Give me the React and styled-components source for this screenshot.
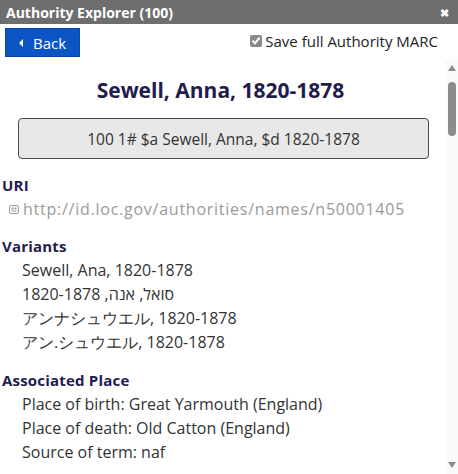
import React from 'react';
import styled, { createGlobalStyle } from 'styled-components';

const GlobalStyle = createGlobalStyle`
  body {
    margin: 0;
    font-family: 'Open Sans', 'Noto Sans', sans-serif;
    background: #ffffff;
  }
`;

const Dialog = styled.div`
  width: 458px;
  height: 474px;
  display: flex;
  flex-direction: column;
  overflow: hidden;
  background: #fff;
`;

const TitleBar = styled.div`
  height: 24px;
  flex: none;
  background: #6e6e6e;
  color: #fff;
  display: flex;
  align-items: center;
  justify-content: space-between;
  padding: 0 9px 0 6px;
  font-size: 14px;
  font-weight: 700;
`;

const CloseIcon = styled.span`
  font-size: 11px;
  line-height: 1;
  font-weight: 700;
`;

const Toolbar = styled.div`
  display: flex;
  align-items: center;
  justify-content: space-between;
  padding: 3px 20px 0 5px;
  flex: none;
  box-sizing: border-box;
  height: 36px;
`;

const BackButton = styled.button`
  width: 75px;
  height: 29px;
  background: #0b55c4;
  border: 1px solid #0948a8;
  color: #fff;
  font-family: 'Open Sans', sans-serif;
  font-size: 15px;
  display: flex;
  align-items: center;
  gap: 10px;
  padding: 0 0 0 13px;
  margin-top: -2px;
  cursor: pointer;
`;

const Caret = styled.span`
  width: 0;
  height: 0;
  border-top: 4px solid transparent;
  border-bottom: 4px solid transparent;
  border-right: 4px solid #fff;
`;

const SaveLabel = styled.label`
  display: flex;
  align-items: center;
  gap: 3px;
  font-size: 15px;
  color: #222;
  margin-top: -6px;
`;

const Check = styled.span`
  width: 12px;
  height: 12px;
  background: #8a8a8a;
  border-radius: 2px;
  display: flex;
  align-items: center;
  justify-content: center;
`;

const Body = styled.div`
  flex: 1;
  display: flex;
  min-height: 0;
`;

const Content = styled.div`
  flex: 1;
  padding: 0 0 0 2px;
`;

const Name = styled.h1`
  margin: 16px 0 0;
  text-align: center;
  font-size: 21px;
  line-height: 28px;
  font-weight: 700;
  color: #1f1c4e;
  padding-right: 6px;
`;

const MarcBox = styled.div`
  margin: 14px 16px 0 16px;
  height: 41px;
  box-sizing: border-box;
  background: #e8e8e8;
  border: 1px solid #4a4a4a;
  border-radius: 4px;
  display: flex;
  align-items: center;
  justify-content: center;
  font-size: 15.5px;
  color: #333;
`;

const SectionTitle = styled.h2`
  margin: ${(p) => p.$top}px 0 0;
  font-size: 15px;
  line-height: 20px;
  font-weight: 700;
  letter-spacing: 0.2px;
  color: #1f1c4e;
`;

const Lines = styled.div`
  padding-left: 20px;
  margin-top: 2px;
`;

const Line = styled.div`
  font-size: 16px;
  line-height: 24px;
  color: ${(p) => (p.$muted ? '#9a9a9a' : '#333')};
  display: flex;
  align-items: center;
  gap: 4px;
  white-space: nowrap;
`;

const UriLine = styled(Line)`
  margin-left: -13px;
  letter-spacing: 0.75px;
`;

const Scrollbar = styled.div`
  width: 13px;
  flex: none;
  background: #fafafa;
  display: flex;
  flex-direction: column;
  align-items: center;
  padding: 5px 0 6px;
  box-sizing: border-box;
`;

const Arrow = styled.span`
  width: 0;
  height: 0;
  border-left: 4px solid transparent;
  border-right: 4px solid transparent;
  ${(p) => (p.$down ? 'border-top: 6px solid #8a8a8a;' : 'border-bottom: 6px solid #8a8a8a;')}
`;

const Thumb = styled.div`
  width: 8px;
  height: 54px;
  margin-top: 11px;
  border-radius: 4px;
  background: #8c8c8c;
`;

const Track = styled.div`
  flex: 1;
`;

const LinkIcon = () => (
  <svg width="10" height="9" viewBox="0 0 10 9">
    <rect x="0.5" y="0.5" width="9" height="8" rx="1.5" fill="none" stroke="#9a9a9a" />
    <rect x="2.5" y="2.5" width="2" height="2" fill="#9a9a9a" />
    <rect x="5.5" y="2.5" width="2" height="2" fill="#9a9a9a" />
    <rect x="2.5" y="5.5" width="5" height="1" fill="#9a9a9a" />
  </svg>
);

const variants = [
  'Sewell, Ana, 1820-1878',
  'סואל, אנה, 1820-1878',
  'アンナシュウエル, 1820-1878',
  'アン.シュウエル, 1820-1878',
];

const places = [
  'Place of birth: Great Yarmouth (England)',
  'Place of death: Old Catton (England)',
  'Source of term: naf',
];

export default function App() {
  return (
    <Dialog>
      <GlobalStyle />
      <TitleBar>
        <span>Authority Explorer (100)</span>
        <CloseIcon>✖</CloseIcon>
      </TitleBar>
      <Toolbar>
        <BackButton>
          <Caret />
          Back
        </BackButton>
        <SaveLabel>
          <Check>
            <svg width="10" height="9" viewBox="0 0 10 9">
              <path d="M1.5 4.8 L4 7.2 L8.6 1.6" fill="none" stroke="#fff" strokeWidth="2" />
            </svg>
          </Check>
          Save full Authority MARC
        </SaveLabel>
      </Toolbar>
      <Body>
        <Content>
          <Name>Sewell, Anna, 1820-1878</Name>
          <MarcBox>100 1# $a Sewell, Anna, $d 1820-1878</MarcBox>
          <SectionTitle $top={16}>URI</SectionTitle>
          <Lines>
            <UriLine $muted>
              <LinkIcon />
              http://id.loc.gov/authorities/names/n50001405
            </UriLine>
          </Lines>
          <SectionTitle $top={15}>Variants</SectionTitle>
          <Lines>
            {variants.map((v) => (
              <Line key={v}>
                <span>{v}</span>
              </Line>
            ))}
          </Lines>
          <SectionTitle $top={16}>Associated Place</SectionTitle>
          <Lines>
            {places.map((p) => (
              <Line key={p}>{p}</Line>
            ))}
          </Lines>
        </Content>
        <Scrollbar>
          <Arrow />
          <Thumb />
          <Track />
          <Arrow $down />
        </Scrollbar>
      </Body>
    </Dialog>
  );
}
